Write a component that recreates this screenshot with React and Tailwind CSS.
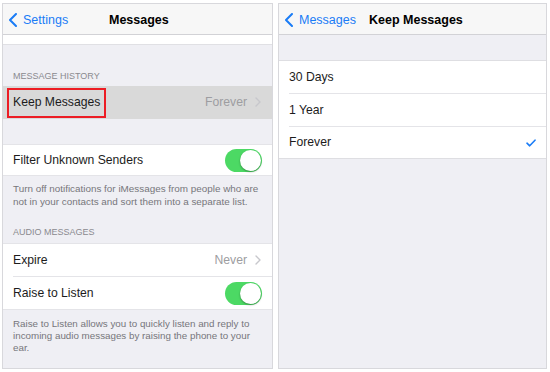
import React from "react";

const font = { fontFamily: '"Liberation Sans", Arial, sans-serif' };

function Chevron({ className = "" }) {
  return (
    <svg width="6" height="10" viewBox="0 0 6 10" className={className}>
      <path d="M1 1l4 4-4 4" fill="none" stroke="#c7c7cc" strokeWidth="1.4" strokeLinecap="round" strokeLinejoin="round" />
    </svg>
  );
}

function BackChevron() {
  return (
    <svg width="8" height="14" viewBox="0 0 8 14">
      <path d="M7 1L1 7l6 6" fill="none" stroke="#1a7cf6" strokeWidth="2" strokeLinecap="round" strokeLinejoin="round" />
    </svg>
  );
}

function Toggle() {
  return (
    <div className="w-[37px] h-[23px] rounded-full bg-[#4cd964] relative">
      <div className="absolute right-[1px] top-[1px] w-[21px] h-[21px] rounded-full bg-white shadow-[0_1px_2px_rgba(0,0,0,0.35)]" />
    </div>
  );
}

function NavBar({ back, title, titleClass }) {
  return (
    <div className="h-[31px] shrink-0 bg-[#f7f7f7] border-b border-[#d2d2d6] relative flex items-center pt-[2px]">
      <div className="flex items-center gap-[6px] pl-[6px] text-[12.5px] text-[#1a7cf6]">
        <BackChevron />
        <span>{back}</span>
      </div>
      <div className={"absolute top-[2px] bottom-0 flex items-center text-[12.5px] font-bold text-black " + titleClass}>{title}</div>
    </div>
  );
}

export default function App() {
  return (
    <div style={font} className="w-[550px] h-[372px] bg-white flex gap-[5px] pl-[2px] pt-[3px]">
      {/* Left panel */}
      <div className="w-[271px] h-[366px] border border-[#d8d8dc] bg-[#efeff4] flex flex-col overflow-hidden">
        <NavBar back="Settings" title="Messages" titleClass="left-[106px]" />
        <div className="h-[10px] shrink-0 bg-white border-b border-[#e0e0e4]" />
        <div className="h-[25px] shrink-0" />
        <div className="px-[10px] text-[9px] text-[#8a8a8f] leading-[12px]">MESSAGE HISTORY</div>
        <div className="h-[4px] shrink-0" />
        <div className="h-[33px] shrink-0 bg-[#d9d9d9] flex items-center justify-between pr-[11px]">
          <div className="ml-[4px] h-[30px] border-2 border-[#ec1c24] px-[4px] flex items-center text-[12.2px] text-[#1c1c1c]">
            Keep Messages
          </div>
          <div className="flex items-center gap-[8px] text-[12.2px] text-[#9d9da1]">
            <span>Forever</span>
            <Chevron />
          </div>
        </div>
        <div className="h-[25px] shrink-0" />
        <div className="h-[32px] shrink-0 bg-white border-y border-[#e4e4e8] flex items-center justify-between pl-[10px] pr-[10px] text-[12.2px] text-[#1c1c1c]">
          <span>Filter Unknown Senders</span>
          <Toggle />
        </div>
        <div className="px-[10px] pt-[6px] text-[9.9px] leading-[13px] text-[#76767b]">
          Turn off notifications for iMessages from people who are
          <br />
          not in your contacts and sort them into a separate list.
        </div>
        <div className="h-[18px] shrink-0" />
        <div className="px-[10px] text-[9px] text-[#8a8a8f] leading-[12px]">AUDIO MESSAGES</div>
        <div className="h-[5px] shrink-0" />
        <div className="bg-white border-y border-[#e4e4e8] shrink-0">
          <div className="h-[32px] flex items-center justify-between pl-[10px] pr-[11px] text-[12.2px] text-[#1c1c1c]">
            <span>Expire</span>
            <div className="flex items-center gap-[8px] text-[#9d9da1]">
              <span>Never</span>
              <Chevron />
            </div>
          </div>
          <div className="ml-[10px] h-px bg-[#e4e4e8]" />
          <div className="h-[32px] flex items-center justify-between pl-[10px] pr-[10px] text-[12.2px] text-[#1c1c1c]">
            <span>Raise to Listen</span>
            <Toggle />
          </div>
        </div>
        <div className="px-[10px] pt-[8px] text-[9.8px] leading-[12px] text-[#76767b]">
          Raise to Listen allows you to quickly listen and reply to
          <br />
          incoming audio messages by raising the phone to your
          <br />
          ear.
        </div>
      </div>

      {/* Right panel */}
      <div className="w-[269px] h-[366px] border border-[#d8d8dc] bg-[#efeff4] flex flex-col overflow-hidden">
        <NavBar back="Messages" title="Keep Messages" titleClass="left-[90px]" />
        <div className="h-[25px] shrink-0" />
        <div className="bg-white border-y border-[#dedee2] shrink-0 text-[12.2px] text-[#1c1c1c]">
          <div className="h-[32px] flex items-center pl-[10px]">30 Days</div>
          <div className="ml-[10px] h-px bg-[#e4e4e8]" />
          <div className="h-[32px] flex items-center pl-[10px]">1 Year</div>
          <div className="ml-[10px] h-px bg-[#e4e4e8]" />
          <div className="h-[31px] flex items-center justify-between pl-[10px] pr-[10px]">
            <span>Forever</span>
            <svg width="10" height="8" viewBox="0 0 10 8">
              <path d="M1 4.2l2.7 2.6L9 1.2" fill="none" stroke="#1a7cf6" strokeWidth="1.6" strokeLinecap="round" strokeLinejoin="round" />
            </svg>
          </div>
        </div>
      </div>
    </div>
  );
}
